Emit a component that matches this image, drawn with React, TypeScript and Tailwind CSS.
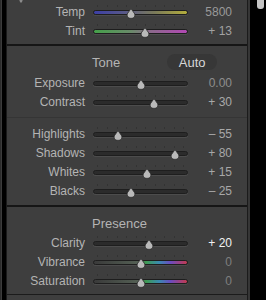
import React from "react";

type Row = {
  label: string;
  value: string;
  pos: number; // thumb center, px from track left
  track?: string;
  valueClass?: string;
};

const font = { fontFamily: '"Liberation Sans", Arial, sans-serif' };

const TEMP = "bg-[linear-gradient(to_right,#3c3fa6,#5a5a86_35%,#7a7a5a_65%,#b3ad3c)]";
const TINT = "bg-[linear-gradient(to_right,#45a14a,#6a8a6a_40%,#8a6a8a_60%,#b248b4)]";
const HUE =
  "bg-[linear-gradient(to_right,#3a3a3a,#546054_48%,#3e9a52_56%,#3a8ab0_70%,#6a4cc0_82%,#c23a50_100%)]";

function Slider({ pos, track }: { pos: number; track?: string }) {
  const ticks = [4, 14, 24, 33, 43, 52, 62, 71, 81, 90];
  return (
    <div className="relative w-[95px] h-full flex items-center">
      {ticks.map((t) => (
        <div key={t} className="absolute top-[3px] w-px h-[2px] bg-[#333333]" style={{ left: t }} />
      ))}
      <div
        className={`w-full h-[5px] mt-[2px] rounded-full border border-[#1e1e1e] shadow-[0_1px_0_#4c4c4c] ${
          track ?? "bg-[#2b2b2b]"
        }`}
      />
      <svg
        className="absolute top-[6px]"
        style={{ left: pos - 5 }}
        width="10"
        height="11"
        viewBox="0 0 10 11"
      >
        <path
          d="M5 0.6 L8.8 6 Q9.6 10.4 5 10.4 Q0.4 10.4 1.2 6 Z"
          fill="#b9b9b9"
          stroke="#2a2a2a"
          strokeWidth="0.8"
        />
      </svg>
    </div>
  );
}

function SliderRow({ label, value, pos, track, valueClass }: Row) {
  return (
    <div className="flex items-center h-[19px] text-[12px]">
      <div className="w-[78px] text-right text-[#b4b4b4] leading-none">{label}</div>
      <div className="ml-[8px] h-full">
        <Slider pos={pos} track={track} />
      </div>
      <div className={`w-[44px] text-right leading-none ${valueClass ?? "text-[#a8a8a8]"}`}>{value}</div>
    </div>
  );
}

export default function App() {
  return (
    <div className="w-[266px] h-[300px] bg-black flex overflow-hidden" style={font}>
      <div className="w-[2px] flex">
        <div className="w-px bg-[#2c2c2c]" />
        <div className="w-px bg-[#3c3c3c]" />
      </div>
      <div className="w-[4px]" />
      <div className="w-[242px] flex flex-col">
        <div className="relative h-[295px] bg-[#3e3e3e] border-l border-r border-b border-[#1b1b1b] flex flex-col pt-[2px]">
          <svg className="absolute left-[11px] -top-[1px]" width="6" height="5" viewBox="0 0 6 5">
            <path d="M1 0 L5 0 L4 3 Q3 4.5 2 3 Z" fill="#8a8a8a" />
          </svg>
          <SliderRow label="Temp" value="5800" pos={38} track={TEMP} valueClass="text-[#9a9a9a]" />
          <SliderRow label="Tint" value="+ 13" pos={52} track={TINT} valueClass="text-[#a2a2a2]" />
          <div className="h-[4px]" />
          <div className="h-[2px] bg-[#161616]" />

          <div className="h-[8px]" />
          <div className="h-[16px] flex items-center text-[13px]">
            <div className="w-[85px]" />
            <div className="text-[#b4b4b4] leading-none">Tone</div>
            <div className="ml-[47px] w-[50px] h-[16px] rounded-full bg-[#373737] flex items-center justify-center text-[#d6d6d6] leading-none">
              Auto
            </div>
          </div>
          <div className="h-[3px]" />
          <SliderRow label="Exposure" value="0.00" pos={48} valueClass="text-[#8e8e8e]" />
          <SliderRow label="Contrast" value="+ 30" pos={61} />
          <div className="h-[6px]" />
          <div className="h-px bg-[#353535]" />
          <div className="h-[6px]" />
          <SliderRow label="Highlights" value="– 55" pos={25} />
          <SliderRow label="Shadows" value="+ 80" pos={82} />
          <SliderRow label="Whites" value="+ 15" pos={54} />
          <SliderRow label="Blacks" value="– 25" pos={38} />
          <div className="h-[5px]" />
          <div className="h-[2px] bg-[#161616]" />

          <div className="h-[8px]" />
          <div className="h-[16px] flex items-center text-[13px]">
            <div className="w-[85px]" />
            <div className="text-[#b4b4b4] leading-none">Presence</div>
          </div>
          <div className="h-[2px]" />
          <SliderRow label="Clarity" value="+ 20" pos={56} valueClass="text-[#f2f2f2]" />
          <SliderRow label="Vibrance" value="0" pos={48} track={HUE} valueClass="text-[#7e7e7e]" />
          <SliderRow label="Saturation" value="0" pos={48} track={HUE} valueClass="text-[#7e7e7e]" />
        </div>
        <div className="flex-1 bg-[#3e3e3e] border-l border-r border-[#1b1b1b]" />
      </div>
      <div className="w-[2px] bg-[#363636]" />
      <div className="flex-1 relative">
        <div className="absolute left-[7px] top-0 w-[7px] h-[9px] rounded-b-[3px] bg-[#c4c4c4]" />
      </div>
    </div>
  );
}
